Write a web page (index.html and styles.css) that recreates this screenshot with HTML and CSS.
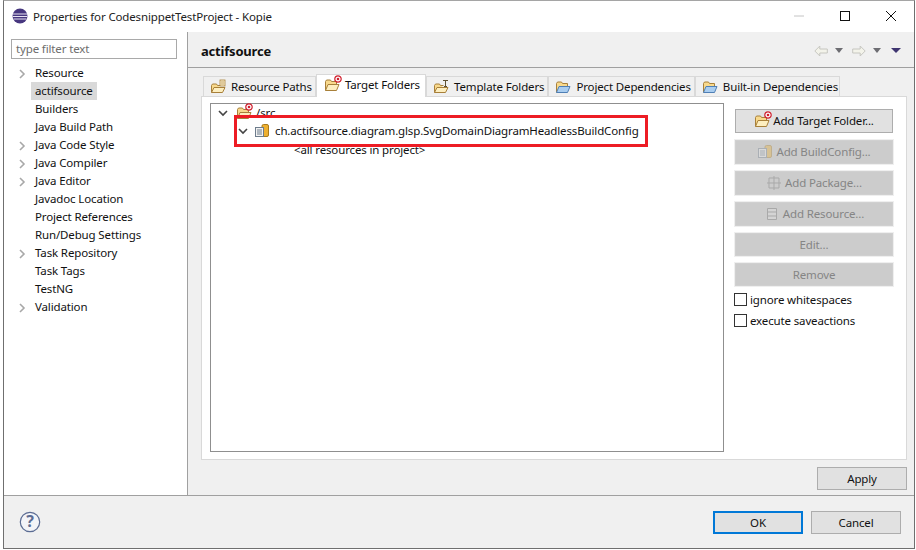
FILE: index.html
```html
<!DOCTYPE html>
<html lang="en">
<head>
<meta charset="utf-8">
<title>Properties for CodesnippetTestProject - Kopie</title>
<link rel="stylesheet" href="styles.css">
</head>
<body>
<svg class="defs" width="0" height="0">
  <symbol id="folder" viewBox="0 0 16 16">
    <path d="M1.500 13.500V4.500l1-1.500h4l1 1.500h5v2.500" fill="#f8d98c" stroke="#a8803a"/>
    <path d="M1.500 13.500l2.500-6h11l-2.500 6z" fill="#fdeebf" stroke="#a8803a"/>
  </symbol>
  <symbol id="folderdoc" viewBox="0 0 16 16">
    <path d="M1.500 13.500V6.500l1-1.500h4l1 1.500h3" fill="#f8d98c" stroke="#a8803a"/>
    <path d="M1.500 13.500l2.500-5h11l-2.500 5z" fill="#fdeebf" stroke="#a8803a"/>
    <rect x="10" y="1" width="5" height="6" fill="#fff3d0" stroke="#a8803a" stroke-width=".8"/>
    <path d="M11 3h3M11 5h3" stroke="#a8803a" stroke-width=".7"/>
  </symbol>
  <symbol id="foldert" viewBox="0 0 16 16">
    <path d="M1.500 13.500V6.500l1-1.500h4l1 1.500h3" fill="#f8d98c" stroke="#a8803a"/>
    <path d="M1.500 13.500l2.500-5h11l-2.500 5z" fill="#fdeebf" stroke="#a8803a"/>
    <path d="M10 1.500h5M12.500 1.500v6M11 7.500h3" stroke="#5e5030" fill="none"/>
  </symbol>
  <symbol id="folderblue" viewBox="0 0 16 16">
    <path d="M1.500 13.500V4.500l1-1.500h4l1 1.500h5v2.500" fill="#f8d98c" stroke="#a8803a"/>
    <path d="M1.500 13.500l2.500-6h11l-2.500 6z" fill="#a9cdf0" stroke="#4f7fb5"/>
  </symbol>
  <symbol id="chev" viewBox="0 0 10 10">
    <path d="M1 3l4 4 4-4" fill="none" stroke="#444" stroke-width="1.600"/>
  </symbol>
  <symbol id="chevr" viewBox="0 0 10 10">
    <path d="M3 1l4 4-4 4" fill="none" stroke="#a8a8a8" stroke-width="1.600"/>
  </symbol>
  <symbol id="target" viewBox="0 0 8 8">
    <circle cx="4" cy="4" r="3.200" fill="#fff" stroke="#d0202e" stroke-width="1.200"/>
    <circle cx="4" cy="4" r="1.300" fill="#d0202e"/>
  </symbol>
  <symbol id="config" viewBox="0 0 16 16">
    <rect x="8" y="1.500" width="6.500" height="12" rx="1.500" fill="#eeb030" stroke="#a97a1c"/>
    <rect x="1.500" y="4.500" width="8" height="9" fill="#f2f2f2" stroke="#6d7c8c"/>
    <path d="M3 7h5M3 9h5M3 11h5" stroke="#6d7c8c"/>
  </symbol>
</svg>

<div class="window">
  <header class="titlebar">
    <svg class="appicon" width="16" height="16" viewBox="0 0 16 16">
      <circle cx="8" cy="8" r="7.500" fill="#47377f"/>
      <path d="M1 6h14M.8 8.500h14.400M1.500 11h13" stroke="#e8e4f2" stroke-width="1"/>
    </svg>
    <span class="title">Properties for CodesnippetTestProject - Kopie</span>
    <div class="winctrls">
      <svg width="12" height="12" viewBox="0 0 12 12"><path d="M1 6h10" stroke="#c4c4c4"/></svg>
      <svg width="12" height="12" viewBox="0 0 12 12"><rect x="1.500" y="1.500" width="9" height="9" fill="none" stroke="#111"/></svg>
      <svg width="12" height="12" viewBox="0 0 12 12"><path d="M1 1l10 10M11 1L1 11" stroke="#111"/></svg>
    </div>
  </header>

  <div class="main">
    <aside class="sidebar">
      <div class="filter">type filter text</div>
      <ul class="navtree">
        <li class="navrow"><svg class="tw"><use href="#chevr"/></svg><span>Resource</span></li>
        <li class="navrow"><span class="selected">actifsource</span></li>
        <li class="navrow"><span>Builders</span></li>
        <li class="navrow"><span>Java Build Path</span></li>
        <li class="navrow"><svg class="tw"><use href="#chevr"/></svg><span>Java Code Style</span></li>
        <li class="navrow"><svg class="tw"><use href="#chevr"/></svg><span>Java Compiler</span></li>
        <li class="navrow"><svg class="tw"><use href="#chevr"/></svg><span>Java Editor</span></li>
        <li class="navrow"><span>Javadoc Location</span></li>
        <li class="navrow"><span>Project References</span></li>
        <li class="navrow"><span>Run/Debug Settings</span></li>
        <li class="navrow"><svg class="tw"><use href="#chevr"/></svg><span>Task Repository</span></li>
        <li class="navrow"><span>Task Tags</span></li>
        <li class="navrow"><span>TestNG</span></li>
        <li class="navrow"><svg class="tw"><use href="#chevr"/></svg><span>Validation</span></li>
      </ul>
    </aside>

    <section class="page">
      <div class="pagehead">
        <h1 class="pagetitle">actifsource</h1>
        <div class="navarrows">
          <svg width="14" height="12" viewBox="0 0 14 12"><path d="M.800 6l5-5v3h7.500v4H5.800v3z" fill="#f3f3ea" stroke="#c6c6c0"/></svg>
          <i class="tri"></i>
          <svg class="next" width="14" height="12" viewBox="0 0 14 12"><path d="M13.200 6l-5-5v3H.700v4h7.500v3z" fill="#f3f3ea" stroke="#c6c6c0"/></svg>
          <i class="tri"></i>
          <i class="tri dark"></i>
        </div>
      </div>

      <div class="pagebody">
        <div class="tabs">
          <div class="tab"><svg class="ic"><use href="#folderdoc"/></svg>Resource Paths</div>
          <div class="tab active"><span class="ic stack"><svg class="ic"><use href="#folder"/></svg><svg class="badge"><use href="#target"/></svg></span>Target Folders</div>
          <div class="tab"><svg class="ic"><use href="#foldert"/></svg>Template Folders</div>
          <div class="tab"><svg class="ic"><use href="#folderblue"/></svg>Project Dependencies</div>
          <div class="tab"><svg class="ic"><use href="#folderblue"/></svg>Built-in Dependencies</div>
        </div>

        <div class="tabpanel">
          <div class="tree">
            <div class="treerow row1"><svg class="tw2"><use href="#chev"/></svg><span class="ic stack"><svg class="ic"><use href="#folder"/></svg><svg class="badge"><use href="#target"/></svg></span><span>/src</span></div>
            <div class="treerow row2"><svg class="tw2"><use href="#chev"/></svg><svg class="ic"><use href="#config"/></svg><span>ch.actifsource.diagram.glsp.SvgDomainDiagramHeadlessBuildConfig</span></div>
            <div class="treerow row3"><span>&lt;all resources in project&gt;</span></div>
            <div class="redbox"></div>
          </div>

          <div class="actions">
            <button class="btn"><span class="ic stack"><svg class="ic"><use href="#folder"/></svg><svg class="badge"><use href="#target"/></svg></span>Add Target Folder...</button>
            <button class="btn off"><svg class="ic dim"><use href="#config"/></svg>Add BuildConfig...</button>
            <button class="btn off"><svg class="ic" viewBox="0 0 16 16"><path d="M3 3h10v10H3zM8 1v14M1 8h14" fill="none" stroke="#a9a9a9"/></svg>Add Package...</button>
            <button class="btn off"><svg class="ic" viewBox="0 0 16 16"><path d="M3.500 2.500h9v11h-9zM3.500 6h9M3.500 10h9" fill="#d4d4d4" stroke="#a9a9a9"/></svg>Add Resource...</button>
            <button class="btn off short">Edit...</button>
            <button class="btn off short last">Remove</button>
            <label class="check"><i class="box"></i>ignore whitespaces</label>
            <label class="check"><i class="box"></i>execute saveactions</label>
          </div>
        </div>

        <div class="applyrow"><button class="btn small">Apply</button></div>
      </div>
    </section>
  </div>

  <footer class="footer">
    <svg class="help" width="22" height="22" viewBox="0 0 22 22">
      <circle cx="11" cy="11" r="9.700" fill="#f3f4f8" stroke="#5b6c93" stroke-width="1.200"/>
      <text x="11" y="16" class="helpq">?</text>
    </svg>
    <div class="footbtns">
      <button class="btn small default">OK</button>
      <button class="btn small">Cancel</button>
    </div>
  </footer>
</div>
</body>
</html>
```
FILE: styles.css
```css
* { box-sizing: border-box; }
html, body { margin: 0; padding: 0; height: 100%; background: #fff; overflow: hidden; }
body { font: 11.5px/16px "Noto Sans", "Open Sans", sans-serif; letter-spacing: -.14px; color: #111; padding-left: 3px; }
.defs { position: absolute; }
ul { list-style: none; margin: 0; padding: 0; }

.window {
  width: 912px; height: 549px;
  border: 1px solid #6f6f6f; border-top-color: #a5a5a5;
  display: flex; flex-direction: column; background: #fff;
}
.titlebar { height: 31px; flex: none; display: flex; align-items: center; padding-left: 8px; background: #fff; }
.appicon { flex: none; margin: 0 5px 1px 0; }
.title { color: #222; }
.winctrls { margin-left: auto; display: flex; align-items: center; gap: 34px; padding: 0 17px 1px 0; }

.main { flex: 1; display: flex; min-height: 0; }
.sidebar { width: 184px; flex: none; background: #fff; border-right: 1px solid #a0a0a0; padding: 7px 0 0 7px; }
.filter {
  width: 166px; height: 20px; border: 1px solid #a9a9a9; padding: 1px 4px;
  color: #6d6d6d; margin-bottom: 5px;
}
.navrow { height: 18px; padding-left: 20px; position: relative; display: flex; align-items: center; }
.navrow span { padding: 0 4px; height: 18px; line-height: 18px; }
.selected { background: #d9d9d9; }
.tw { width: 10px; height: 10px; position: absolute; left: 6px; top: 5px; }

.page { flex: 1; background: #f0f0f0; display: flex; flex-direction: column; min-width: 0; }
.pagehead {
  height: 36px; flex: none; display: flex; align-items: center; justify-content: space-between;
  border-bottom: 1px solid #a0a0a0; padding: 2px 13px 0 13px;
}
.pagetitle { margin: 0; font-size: 13px; font-weight: 700; letter-spacing: -.2px; color: #111; }
.navarrows { display: flex; align-items: center; gap: 7px; }
.next { margin-left: 2px; }
.tri { width: 0; height: 0; border: 4px solid transparent; border-top: 5px solid #6d6d72; border-bottom: 0; }
.tri.dark { border-top-color: #3f3570; border-left-width: 5px; border-right-width: 5px; margin-left: 3px; }

.pagebody { flex: 1; padding: 7px 7px 0 13px; display: flex; flex-direction: column; min-height: 0; }
.tabs { display: flex; align-items: flex-end; height: 21px; flex: none; padding-left: 2px; position: relative; z-index: 1; }
.tab {
  height: 20px; display: flex; align-items: center; gap: 5px; padding: 0 3px 0 6px;
  background: #f0f0f0; border: 1px solid #d9d9d9; border-bottom: 0; white-space: nowrap;
}
.tab:last-child { padding-right: 1px; }
.tab.active { height: 23px; background: #fff; padding: 0 5px 3px 7px; margin-bottom: -1px; }
.ic { width: 16px; height: 16px; flex: none; display: inline-block; }
.stack { position: relative; }
.badge { position: absolute; width: 8px; height: 8px; right: -2px; top: -2px; }
.dim { opacity: .35; }

.tabpanel { height: 364px; flex: none; background: #fff; border: 1px solid #d9d9d9; padding: 6px 13px 7px 8px; display: flex; gap: 11px; }
.tree { flex: 1; border: 1px solid #8f8f8f; background: #fff; position: relative; }
.treerow { height: 18px; display: flex; align-items: center; white-space: nowrap; }
.row1 { padding-left: 7px; }
.row2 { padding-left: 27px; }
.row3 { padding-left: 83px; margin-top: 1px; }
.tw2 { width: 10px; height: 10px; flex: none; margin-right: 6px; }
.row1 .ic { margin-right: 5px; margin-left: 1px; }
.row2 .ic { margin-right: 5px; }
.redbox { position: absolute; left: 23px; top: 11px; width: 414px; height: 32px; border: 3px solid #ed1c24; }

.actions { width: 158px; flex: none; display: flex; flex-direction: column; padding-top: 6px; }
.btn {
  height: 24px; width: 158px; margin: 0 0 7px 0; border: 1px solid #adadad; background: #e1e1e1;
  font: inherit; letter-spacing: inherit; color: #111; display: flex; align-items: center; justify-content: center; gap: 3px; padding: 0;
}
.btn.off { border-color: #d0d0d0; background: #cccccc; color: #858585; outline: 1px solid #efefef; }
.btn.short { height: 23px; }
.btn.last { margin-bottom: 3px; }
.check { height: 21px; display: flex; align-items: center; gap: 3px; margin-left: -1px; }
.box { width: 13px; height: 13px; border: 1px solid #333; background: #fff; flex: none; }

.applyrow { display: flex; justify-content: flex-end; padding-top: 7px; }
.btn.small { width: 90px; height: 23px; margin: 0; }
.footer { height: 53px; flex: none; background: #f0f0f0; border-top: 1px solid #a0a0a0; display: flex; align-items: flex-start; padding: 15px 13px 0 15px; }
.help { flex: none; }
.helpq { font: 700 16px "Noto Sans", sans-serif; fill: #5b6c93; text-anchor: middle; }
.footbtns { margin-left: auto; display: flex; gap: 8px; }
.btn.default { border: 2px solid #0078d7; }
```
